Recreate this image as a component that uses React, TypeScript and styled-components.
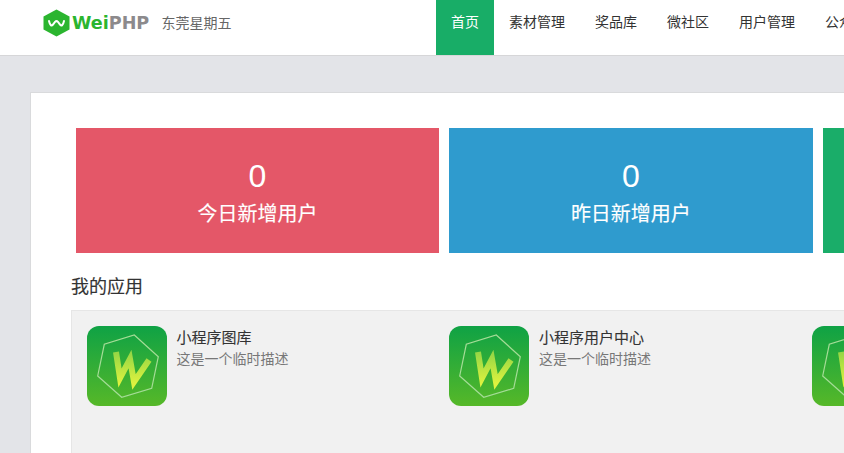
import React from "react";
import styled, { createGlobalStyle } from "styled-components";

const Global = createGlobalStyle`
  html, body { margin: 0; padding: 0; height: 100%; overflow: hidden; background: #e3e4e8; }
  body { font-family: "Liberation Sans", "Noto Sans CJK SC", sans-serif; }
  * { box-sizing: border-box; }
`;

const Page = styled.div`
  width: 844px;
  height: 453px;
  overflow: hidden;
  background: #e3e4e8;
`;

const Header = styled.header`
  display: flex;
  width: 1100px;
  height: 56px;
  background: #fff;
  border-bottom: 1px solid #d6d6d8;
`;

const Brand = styled.div`
  display: flex;
  align-items: flex-start;
  width: 436px;
  padding: 9px 0 0 43px;
`;

const LogoWord = styled.span`
  flex: 0 0 78px;
  margin-left: 2px;
  font: bold 17.6px/28px "DejaVu Sans", sans-serif;
  color: #2bb52f;
  white-space: nowrap;
`;

const LogoGrey = styled.span`
  color: #8c8a8c;
`;

const Slogan = styled.span`
  margin-left: 11.4px;
  font-size: 14px;
  line-height: 28px;
  color: #666;
  white-space: nowrap;
`;

const Nav = styled.nav`
  display: flex;
`;

const NavItem = styled.a<{ $active?: boolean }>`
  padding: 0 15px;
  height: 55px;
  font-size: 14px;
  line-height: 44px;
  white-space: nowrap;
  color: ${(p) => (p.$active ? "#fff" : "#333")};
  background: ${(p) => (p.$active ? "#18ad67" : "transparent")};
`;

const Panel = styled.main`
  width: 1100px;
  height: 500px;
  margin: 36px 0 0 30px;
  padding: 35px 0 0 40px;
  background: #fff;
  border: 1px solid #d9dadc;
`;

const Stats = styled.section`
  display: flex;
  gap: 10px;
  margin-left: 4.8px;
`;

const StatCard = styled.div<{ $color: string }>`
  flex: 0 0 363.4px;
  height: 125px;
  padding-top: 28px;
  text-align: center;
  color: #fff;
  background: ${(p) => p.$color};
`;

const StatValue = styled.div`
  font-size: 32px;
  line-height: 40px;
`;

const StatLabel = styled.div`
  margin-top: 3px;
  font-size: 20px;
  line-height: 30px;
  -webkit-text-stroke: 0.15px #fff;
`;

const SectionTitle = styled.h2`
  margin: 19px 0 8px;
  font-size: 18px;
  font-weight: 400;
  line-height: 30px;
  color: #333;
  -webkit-text-stroke: 0.15px #333;
`;

const AppsBox = styled.section`
  display: flex;
  height: 200px;
  padding: 15px 0 0 15px;
  background: #f1f1f1;
  border: 1px solid #e6e6e6;
`;

const AppItem = styled.div`
  display: flex;
  flex: 0 0 362.4px;
`;

const AppIcon = styled.svg`
  flex: none;
  width: 80px;
  height: 80px;
  border-radius: 12px;
`;

const AppInfo = styled.div`
  margin-left: 9.5px;
  padding-top: 1px;
`;

const AppName = styled.div`
  font-size: 15px;
  line-height: 21px;
  color: #333;
  -webkit-text-stroke: 0.1px #333;
`;

const AppDesc = styled.div`
  font-size: 14px;
  line-height: 22px;
  color: #777;
`;

const Logo = () => (
  <svg width="27" height="28" viewBox="0 0 27 28">
    <path d="M13.5 0.5 26.500 7.500V20.500L13.500 27.500 0.500 20.500V7.500Z" fill="#2bb52f" />
    <path d="M6 12c1 4.500 2.500 5.300 4 3.500l2-2.600c1-1 2-1 3 0l2 2.600c1.500 1.800 3 1 4-3.500" fill="none" stroke="#fff" strokeWidth="2" strokeLinecap="round" />
  </svg>
);

const WIcon = ({ id }: { id: string }) => (
  <AppIcon viewBox="0 0 80 80">
    <defs>
      <linearGradient id={`${id}-bg`} x1="0" y1="0" x2="0" y2="1">
        <stop offset="0" stopColor="#0fa245" />
        <stop offset="1" stopColor="#56b828" />
      </linearGradient>
      <linearGradient id={`${id}-w`} gradientUnits="userSpaceOnUse" x1="0" y1="24" x2="0" y2="58">
        <stop offset="0" stopColor="#8fd445" />
        <stop offset="1" stopColor="#dff23f" />
      </linearGradient>
    </defs>
    <rect width="80" height="80" fill={`url(#${id}-bg)`} />
    <path d="M47.300 9 71.300 30.700 64.700 62.300 34.700 71.300 10.700 50 17.300 18.300Z" fill="none" stroke="#a4dc96" strokeWidth="1.200" />
    <path d="M29 26 33 52 43 33 47 56 62 34" fill="none" stroke={`url(#${id}-w)`} strokeWidth="6" strokeLinejoin="miter" />
  </AppIcon>
);

const navItems = ["素材管理", "奖品库", "微社区", "用户管理", "公众号管理"];
const apps = [
  { id: "a", name: "小程序图库" },
  { id: "b", name: "小程序用户中心" },
  { id: "c", name: "小程序" },
];

export default function App() {
  return (
    <Page>
      <Global />
      <Header>
        <Brand>
          <Logo />
          <LogoWord>
            Wei<LogoGrey>PHP</LogoGrey>
          </LogoWord>
          <Slogan>东莞星期五</Slogan>
        </Brand>
        <Nav>
          <NavItem $active>首页</NavItem>
          {navItems.map((n) => (
            <NavItem key={n}>{n}</NavItem>
          ))}
        </Nav>
      </Header>
      <Panel>
        <Stats>
          <StatCard $color="#e45768">
            <StatValue>0</StatValue>
            <StatLabel>今日新增用户</StatLabel>
          </StatCard>
          <StatCard $color="#2f9bce">
            <StatValue>0</StatValue>
            <StatLabel>昨日新增用户</StatLabel>
          </StatCard>
          <StatCard $color="#1aad69">
            <StatValue>0</StatValue>
            <StatLabel>累计用户</StatLabel>
          </StatCard>
        </Stats>
        <SectionTitle>我的应用</SectionTitle>
        <AppsBox>
          {apps.map((a) => (
            <AppItem key={a.id}>
              <WIcon id={a.id} />
              <AppInfo>
                <AppName>{a.name}</AppName>
                <AppDesc>这是一个临时描述</AppDesc>
              </AppInfo>
            </AppItem>
          ))}
        </AppsBox>
      </Panel>
    </Page>
  );
}
